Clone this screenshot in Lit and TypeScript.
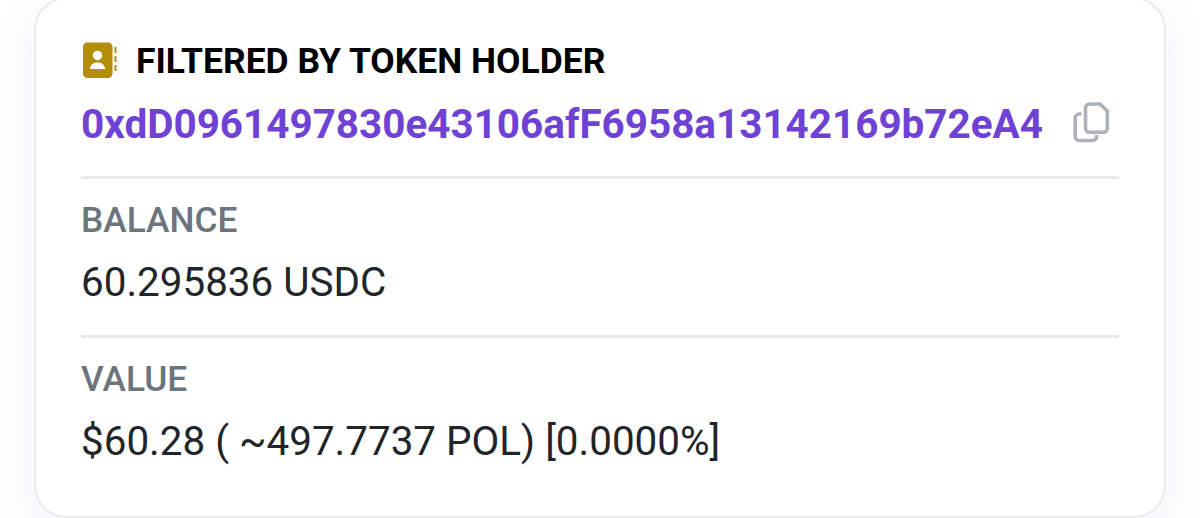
import { LitElement, html, css } from 'lit';
import { customElement, property } from 'lit/decorators.js';

@customElement('app-root')
export class AppRoot extends LitElement {
  @property() holder = '0xdD0961497830e43106afF6958a13142169b72eA4';
  @property() balance = '60.295836 USDC';
  @property() value = '$60.28 ( ~497.7737 POL) [0.0000%]';

  static styles = css`
    :host {
      display: block;
      height: 518px;
      overflow: hidden;
      background: #fefefe;
      font-family: Roboto, sans-serif;
      color: #212529;
    }

    .card {
      box-sizing: border-box;
      width: 1132px;
      height: 521px;
      margin: -3px 0 0 34px;
      padding: 37px 45px 0;
      background: #fff;
      border: 2px solid #e9eaeb;
      border-radius: 33px;
      box-shadow: 0 12px 36px rgba(189, 197, 225, 0.15);
    }

    .heading {
      display: flex;
      align-items: center;
      height: 50px;
      color: #000;
    }

    .heading h2 {
      margin: 0 0 0 19px;
      font-size: 35.45px;
      font-weight: 700;
      white-space: nowrap;
    }

    .address {
      display: flex;
      align-items: center;
      justify-content: space-between;
      height: 74px;
      padding-right: 9px;
      margin-bottom: 16px;
    }

    .address a {
      padding-top: 1px;
      color: #6f42d5;
      font-size: 40.45px;
      font-weight: 700;
      white-space: nowrap;
    }

    .row {
      border-top: 3px solid #e9eaeb;
      height: 156px;
    }

    .label {
      height: 79px;
      line-height: 82px;
      font-size: 35.3px;
      font-weight: 500;
      color: #6c757d;
    }

    .amount {
      line-height: 49px;
      font-size: 40.4px;
      white-space: nowrap;
    }

    svg {
      display: block;
      flex: none;
    }
  `;

  render() {
    return html`
      <div class="card">
        <div class="heading">
          <svg width="36" height="38" viewBox="0 0 36 38">
            <rect x="2" y="0.5" width="29.5" height="35.5" rx="4.5" fill="#b58e08" />
            <circle cx="16.500" cy="13.500" r="4.700" fill="#fff" />
            <path d="M9 27a6.500 6.500 0 0 1 6.500-6.500h2a6.500 6.500 0 0 1 6.500 6.500z" fill="#fff" />
            <path d="M34.500 5v6M34.500 14v6M34.500 23v6" stroke="#b58e08" stroke-width="2" />
          </svg>
          <h2>FILTERED BY TOKEN HOLDER</h2>
        </div>
        <div class="address">
          <a>${this.holder}</a>
          <svg width="37" height="42" viewBox="0 0 37 42" fill="none" stroke="#adb1ba" stroke-width="3.600">
            <path d="M16.500 2h10.500l7.300 7v17.300a4 4 0 0 1-4 4H16.500a4 4 0 0 1-4-4V6a4 4 0 0 1 4-4z" />
            <path d="M8.500 12H6.200a4 4 0 0 0-4 4v18.500a4 4 0 0 0 4 4h13.500a4 4 0 0 0 4-4V33" />
          </svg>
        </div>
        <div class="row">
          <div class="label">BALANCE</div>
          <div class="amount">${this.balance}</div>
        </div>
        <div class="row">
          <div class="label">VALUE</div>
          <div class="amount">${this.value}</div>
        </div>
      </div>
    `;
  }
}
